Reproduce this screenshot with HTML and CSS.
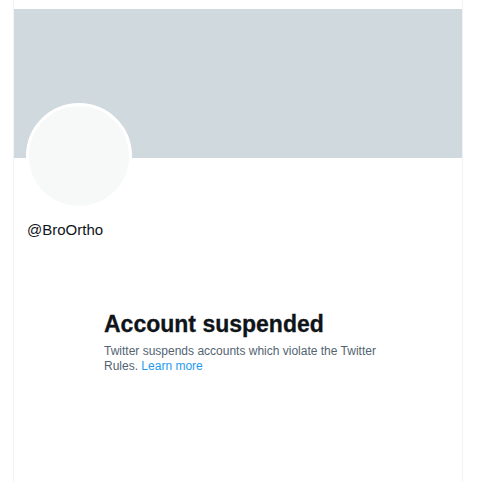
FILE: index.html
```html
<!DOCTYPE html>
<html lang="en">
<head>
<meta charset="utf-8">
<title>@BroOrtho</title>
<link rel="stylesheet" href="styles.css">
</head>
<body>
<main class="column">
  <div class="banner"></div>
  <div class="profile">
    <div class="avatar"></div>
    <div class="handle">@BroOrtho</div>
  </div>
  <section class="notice">
    <h1 class="notice-title">Account suspended</h1>
    <p class="notice-text">Twitter suspends accounts which violate the Twitter Rules. <a class="notice-link" href="#">Learn more</a></p>
  </section>
</main>
</body>
</html>
```

FILE: styles.css
```css
html, body {
  margin: 0;
  padding: 0;
  background: #ffffff;
  height: 100%;
}
body {
  font-family: "Liberation Sans", Arial, sans-serif;
  color: #0f1419;
  overflow: hidden;
}
.column {
  box-sizing: border-box;
  margin-left: 13px;
  width: 450px;
  min-height: 482px;
  padding-top: 9px;
  border-left: 1px solid #eff3f4;
  border-right: 1px solid #eff3f4;
}
.banner {
  height: 149px;
  background: #cfd9de;
}
.profile {
  padding: 0 12px;
}
.avatar {
  box-sizing: border-box;
  width: 106px;
  height: 106px;
  margin-top: -55px;
  border-radius: 50%;
  border: 3px solid #ffffff;
  background: #f7f9f9;
}
.handle {
  margin-top: 11px;
  font-size: 15px;
  line-height: 20px;
  padding-left: 1px;
}
.notice {
  margin: 70px 0 0 90px;
  width: 284px;
}
.notice-title {
  margin: 0;
  font-size: 23px;
  line-height: 28px;
  font-weight: 700;
  color: #0f1419;
  -webkit-text-stroke: 0.3px #0f1419;
}
.notice-text {
  margin: 6px 0 0;
  font-size: 12px;
  line-height: 15px;
  color: #536471;
}
.notice-link {
  color: #1d9bf0;
  text-decoration: none;
}
```
